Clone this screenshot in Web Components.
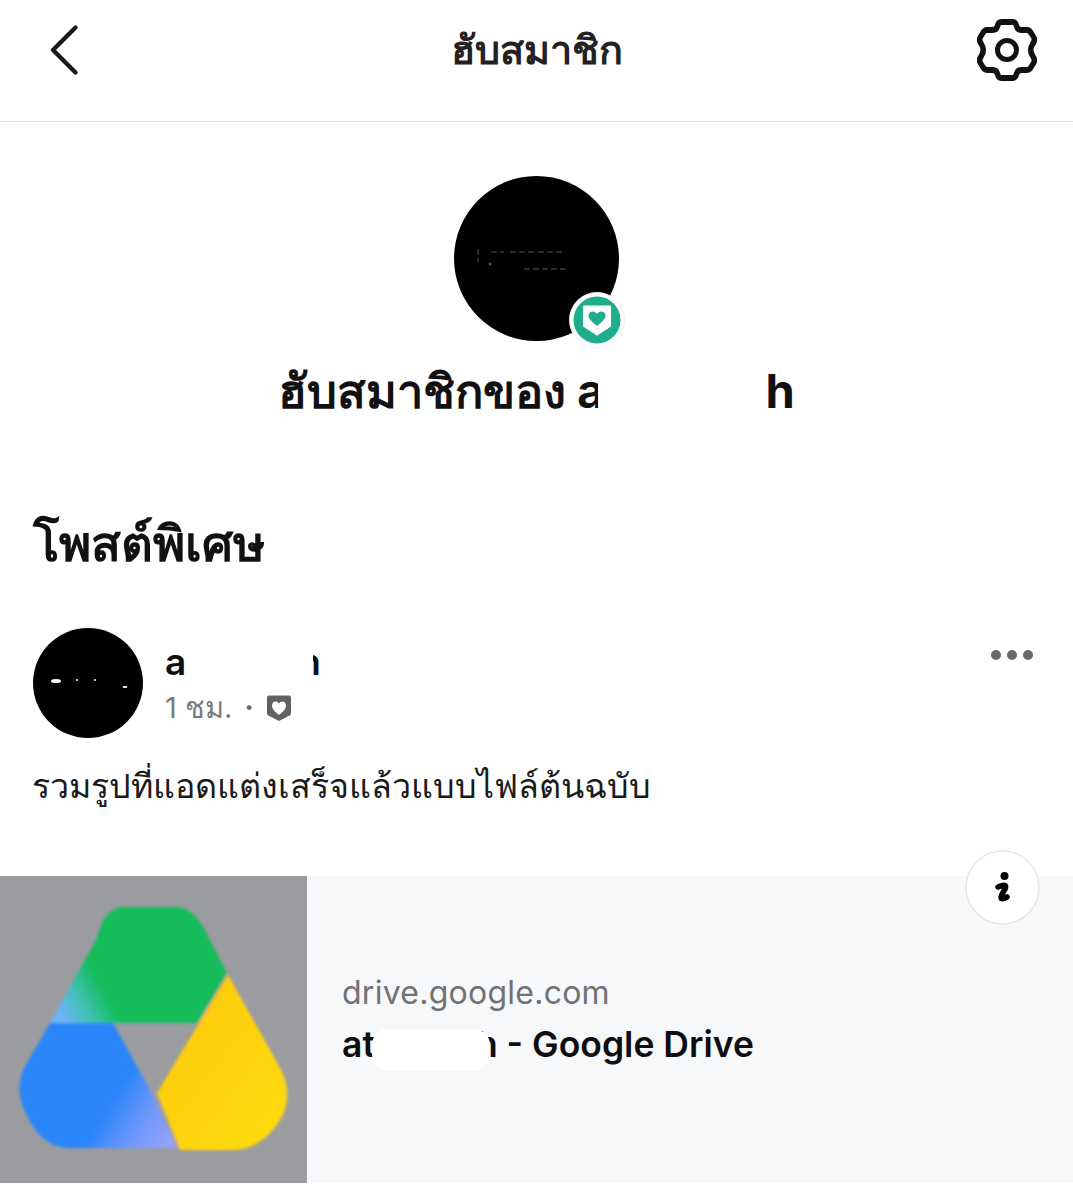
<!DOCTYPE html>
<html lang="th">
<head>
<meta charset="utf-8">
<title>ฮับสมาชิก</title>
<style>
    html, body { margin: 0; background: #fff; }
    body { font-family: Inter, "Noto Sans", "DejaVu Sans", sans-serif; color: #0f0f10; }
</style>
</head>
<body>
<template id="topBarTemplate">
    <style>
        :host {
            display: grid;
            grid-template-columns: 1fr auto 1fr;
            align-items: center;
            height: 99px;
            padding: 0 36px 22px 36px;
            border-bottom: 1px solid #e4e4e4;
        }
        #title { font-size: 39.500px; font-weight: 700; color: #222; }
        svg { display: block; }
        #back { margin-left: 12px; }
        #gear { justify-self: end; }
    </style>
    <svg id="back" width="32" height="52" viewBox="0 0 32 52" fill="none" stroke="#1a1a1a" stroke-width="4.4" stroke-linecap="round" stroke-linejoin="round"><path d="M27.500 3.500 L5 26 L27.500 48.500"/></svg>
    <span id="title"><slot></slot></span>
    <svg id="gear" width="60" height="66" viewBox="-30 -33 60 66" fill="none" stroke="#111" stroke-width="5.800" stroke-linejoin="round">
        <path transform="scale(.95 1)" d="M0 -28 L6 -28 Q9 -28 10 -24 Q11 -20 15 -20 L21 -20 Q24 -20 26 -16 L28 -13 Q30 -10 27 -6 Q23 0 27 6 Q30 10 28 13 L26 16 Q24 20 21 20 L15 20 Q11 20 10 24 Q9 28 6 28 L-6 28 Q-9 28 -10 24 Q-11 20 -15 20 L-21 20 Q-24 20 -26 16 L-28 13 Q-30 10 -27 6 Q-23 0 -27 -6 Q-30 -10 -28 -13 L-26 -16 Q-24 -20 -21 -20 L-15 -20 Q-11 -20 -10 -24 Q-9 -28 -6 -28 Z"/>
        <circle r="9.500" stroke-width="5"/>
    </svg>
</template>

<template id="hubProfileTemplate">
    <style>
        :host { display: flex; flex-direction: column; align-items: center; padding-top: 54px; }
        #avatar { position: relative; width: 165px; height: 165px; border-radius: 50%; background: #000; }
        #specks { position: absolute; left: 0; top: 0; }
        #badge { position: absolute; left: 115px; top: 116px; width: 56px; height: 56px; }
        #name { position: relative; margin-top: 20px; font-size: 47px; line-height: 60px; font-weight: 700; white-space: nowrap; color: #111; }
        #gap { display: inline-block; width: 161px; }
        #mask { position: absolute; left: 320px; top: 0; width: 164px; height: 60px; background: #fff; }
    </style>
    <div id="avatar">
        <svg id="specks" width="165" height="165" fill="none" stroke="#fff" stroke-width="1" opacity=".35">
            <path d="M24 73 V86 M37 76 H50 M56 76 H80 M84 76 H110 M70 93 H115" stroke-dasharray="6 3"/>
            <circle cx="36" cy="88" r="1.500" fill="#fff" stroke="none"/>
        </svg>
        <svg id="badge" viewBox="0 0 56 56">
            <circle cx="28" cy="28" r="27.500" fill="#fff" stroke="#eef0ef"/>
            <circle cx="28" cy="28" r="23.500" fill="#1fae8c"/>
            <path d="M15 14.500 H41 V34 L28 42.500 L15 34 Z" fill="#fff" stroke="#fff" stroke-width="2" stroke-linejoin="round"/>
            <path d="M28 34 C22 29 19.500 26.500 19.500 23.500 C19.500 19 25.500 18 28 22 C30.500 18 36.500 19 36.500 23.500 C36.500 26.500 34 29 28 34 Z" fill="#1fae8c"/>
        </svg>
    </div>
    <div id="name"><slot></slot>a<span id="gap"></span>h<span id="mask"></span></div>
</template>

<template id="specialPostTemplate">
    <style>
        :host { display: block; }
        #heading { font-size: 49px; line-height: 70px; font-weight: 700; padding: 0 33px; margin-top: 88px; color: #111; }
        #head { display: flex; align-items: flex-start; gap: 22px; padding: 0 33px; margin-top: 49px; }
        #avatar { flex: none; display: block; width: 110px; height: 110px; border-radius: 50%; background: #000; }
        #who { flex-grow: 1; padding-top: 12px; }
        #name { position: relative; font-size: 37px; line-height: 44px; font-weight: 600; white-space: nowrap; }
        #name i { position: absolute; left: 24px; top: 0; width: 124px; height: 44px; background: #fff; }
        #name b { display: inline-block; width: 112px; }
        #meta { display: flex; align-items: center; gap: 12px; margin-top: 2px; font-size: 29px; line-height: 44px; color: #777a7d; }
        #meta b { font-weight: 700; color: #66686b; }
        #dots { margin-top: 21px; margin-right: 6px; }
        #body { padding: 0 32px; margin-top: 26px; font-size: 34px; line-height: 44px; color: #1a1a1a; }
        svg { display: block; }
    </style>
    <div id="heading"><slot name="heading"></slot></div>
    <div id="head">
        <svg id="avatar" viewBox="0 0 110 110" fill="#fff">
            <ellipse cx="23" cy="53" rx="5" ry="2"/><circle cx="44" cy="52" r="1"/><circle cx="62" cy="52" r="1"/><ellipse cx="92" cy="59" rx="2.500" ry="1"/>
        </svg>
        <div id="who">
            <div id="name">a<b></b>h<i></i></div>
            <div id="meta">
                <span><slot name="age"></slot></span>
                <b>·</b>
                <svg width="26" height="28" viewBox="0 0 26 28">
                    <path d="M3 1.500 H23 Q25 1.500 25 3.500 V19 Q25 20.500 23.500 21.500 L13 27 L2.500 21.500 Q1 20.500 1 19 V3.500 Q1 1.500 3 1.500 Z" fill="#5f6265"/>
                    <path d="M13 21 C8 17 6 14.500 6 11.500 C6 7 11 6 13 9.500 C15 6 20 7 20 11.500 C20 14.500 18 17 13 21 Z" fill="#fff"/>
                </svg>
            </div>
        </div>
        <svg id="dots" width="44" height="12" viewBox="0 0 44 12" fill="#66686b"><circle cx="6" cy="6" r="5"/><circle cx="22" cy="6" r="5"/><circle cx="38" cy="6" r="5"/></svg>
    </div>
    <div id="body"><slot></slot></div>
</template>

<template id="linkCardTemplate">
    <style>
        :host { display: grid; grid-template-columns: 307px 1fr; position: relative; height: 307px; margin-top: 68px; background: #f7f8fa; }
        #thumb { display: block; width: 307px; height: 307px; background: #9b9ca0; }
        #text { display: flex; flex-direction: column; justify-content: center; padding: 0 0 22px 35px; }
        #domain { font-size: 32px; line-height: 44px; color: #707275; letter-spacing: .25px; }
        #title { position: relative; margin-top: 8px; font-size: 35.500px; line-height: 44px; font-weight: 600; color: #0e0e0f; white-space: nowrap; }
        #title i { position: absolute; left: 30px; top: 6px; width: 118px; height: 42px; border-radius: 16px; background: #fff; }
        #title b { display: inline-block; width: 101px; }
        #info { position: absolute; left: 965px; top: -26px; width: 75px; height: 75px; }
    </style>
    <svg id="thumb" viewBox="0 0 307 307">
        <defs>
            <filter id="soft" x="-5%" y="-5%" width="110%" height="110%"><feGaussianBlur stdDeviation="1.800"/></filter>
            <linearGradient id="blue" gradientUnits="userSpaceOnUse" x1="108" y1="232" x2="172" y2="272"><stop offset="0" stop-color="#2b86f8"/><stop offset=".25" stop-color="#4f8dfb"/><stop offset=".5" stop-color="#6f97fb"/><stop offset="1" stop-color="#9aa4fb"/></linearGradient>
            <linearGradient id="gold" x1="0" y1="0" x2="1" y2="1"><stop offset="0" stop-color="#ffc80d"/><stop offset=".5" stop-color="#ffd20e"/><stop offset="1" stop-color="#ffdc10"/></linearGradient>
            <linearGradient id="leaf" gradientUnits="userSpaceOnUse" x1="62" y1="140" x2="106" y2="116"><stop offset="0" stop-color="#6cb3f5"/><stop offset=".5" stop-color="#3fc0b0"/><stop offset="1" stop-color="#12bc5a"/></linearGradient>
        </defs>
        <g filter="url(#soft)">
            <path d="M50 147 L97 62 Q103 35 120 31 H176 Q195 31 208 60 L227 97 L197 147 Z" fill="url(#leaf)"/>
            <path d="M50 147 H113 L150 214 L177 272 H74 Q46 274 30 246 L25 236 Q14 212 25 190 Z" fill="url(#blue)"/>
            <path d="M228 99 L279 190 Q297 222 276 250 Q258 274 232 274 H180 L157 217 Z" fill="url(#gold)"/>
        </g>
    </svg>
    <div id="text">
        <div id="domain"><slot name="domain"></slot></div>
        <div id="title">at<b></b>h<i></i> - <slot name="title"></slot></div>
    </div>
    <svg id="info" viewBox="0 0 75 75">
        <circle cx="37.500" cy="37.500" r="36.500" fill="#fff" stroke="#e6e6e6" stroke-width="1.500"/>
        <circle cx="39.500" cy="26" r="4" fill="#000"/>
        <path d="M33 37 Q42 33 40.500 38 Q37 44 36 47 Q36 50.500 42 47" fill="none" stroke="#000" stroke-width="5.500" stroke-linecap="round" stroke-linejoin="round"/>
    </svg>
</template>

<top-bar>ฮับสมาชิก</top-bar>
<hub-profile>ฮับสมาชิกของ </hub-profile>
<special-post>
    <span slot="heading">โพสต์พิเศษ</span>
    <span slot="age">1 ชม.</span>
    รวมรูปที่แอดแต่งเสร็จแล้วแบบไฟล์ต้นฉบับ
</special-post>
<link-card>
    <span slot="domain">drive.google.com</span>
    <span slot="title">Google Drive</span>
</link-card>

<script>
class TemplateElement extends HTMLElement {
    constructor(templateId) {
        super();
        const shadowRoot = this.attachShadow({mode: 'open'});
        shadowRoot.appendChild(document.getElementById(templateId).content.cloneNode(true));
    }
}
customElements.define('top-bar', class extends TemplateElement { constructor() { super('topBarTemplate'); } });
customElements.define('hub-profile', class extends TemplateElement { constructor() { super('hubProfileTemplate'); } });
customElements.define('special-post', class extends TemplateElement { constructor() { super('specialPostTemplate'); } });
customElements.define('link-card', class extends TemplateElement { constructor() { super('linkCardTemplate'); } });
</script>
</body>
</html>
